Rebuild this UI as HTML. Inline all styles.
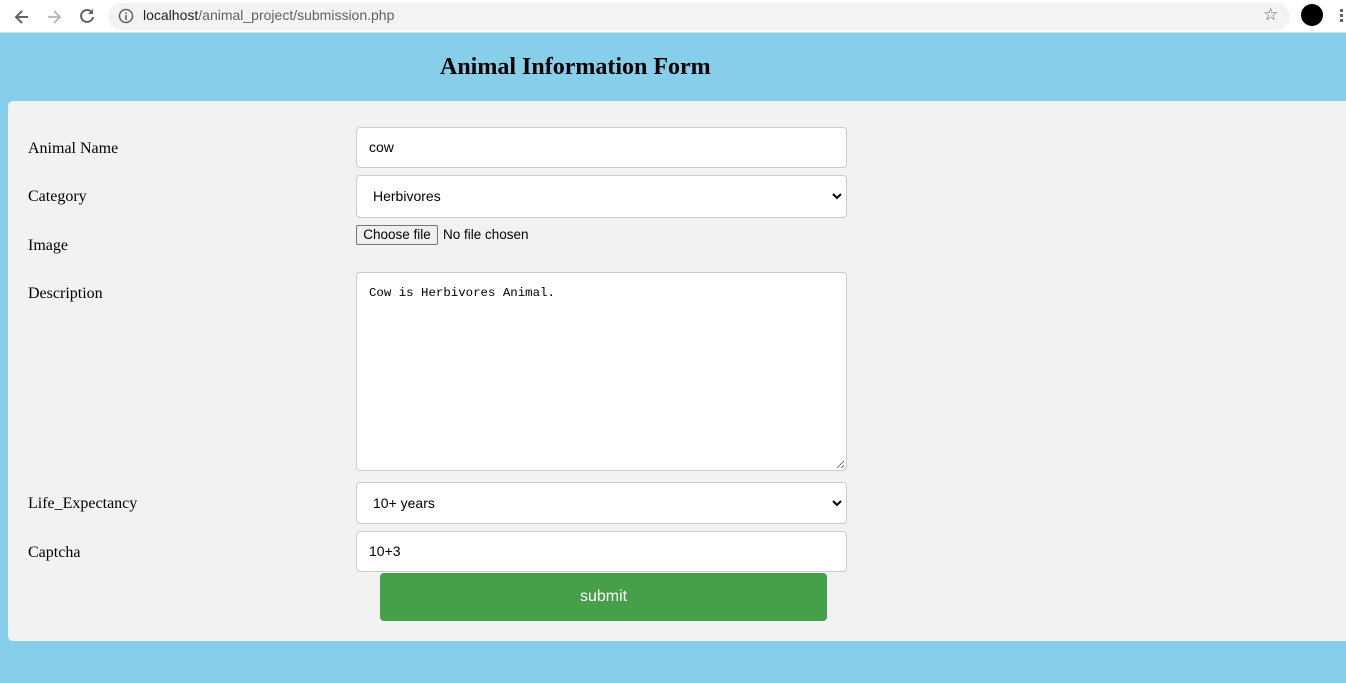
<!DOCTYPE html>
<html><head><meta charset="utf-8"><style>
*{box-sizing:border-box;margin:0;padding:0}
body{width:1346px;height:683px;overflow:hidden;background:#87CEEB;position:relative;font-family:"Liberation Serif",serif}
.bar{position:absolute;left:0;top:0;width:1346px;height:33px;background:#fff;border-bottom:1px solid #dadce0}
.omni{position:absolute;left:108px;top:3px;width:1182px;height:27px;background:#f1f3f4;border-radius:14px}
.url{position:absolute;left:143px;top:7px;font:14px "Liberation Sans",sans-serif;color:#202124}
.url span{color:#5f6368}
.a{position:absolute}
h2{position:absolute;left:440px;top:54px;font-size:24px;font-weight:bold;color:#000}
.panel{position:absolute;left:8px;top:101px;width:1346px;height:540px;background:#f2f2f2;border-radius:5px}
.lbl{position:absolute;left:28px;font-size:16px;color:#000}
.f{position:absolute;left:356px;width:491px;background:#fff;border:1px solid #ccc;border-radius:4px;font:14px "Liberation Sans",sans-serif;color:#000}
.btn{position:absolute;left:380px;top:573px;width:447px;height:48px;background:#45a049;border-radius:4px;color:#fff;font:16px "Liberation Sans",sans-serif;text-align:center;line-height:48px}
</style></head><body>
<div class="bar">
<svg class="a" style="left:12px;top:7px" width="20" height="20" viewBox="0 0 20 20"><path d="M16 10H5M10 4l-6 6 6 6" stroke="#5f6368" stroke-width="2" fill="none"/></svg>
<svg class="a" style="left:44px;top:7px" width="20" height="20" viewBox="0 0 20 20"><path d="M4 10h11M10 4l6 6-6 6" stroke="#bbb" stroke-width="2" fill="none"/></svg>
<svg class="a" style="left:77px;top:6px" width="20" height="20" viewBox="0 0 20 20"><path d="M15 6.5A6 6 0 1 0 16 11" stroke="#5f6368" stroke-width="2" fill="none"/><path d="M16 3v5h-5z" fill="#5f6368"/></svg>
<div class="omni"></div>
<svg class="a" style="left:118px;top:8px" width="16" height="16" viewBox="0 0 16 16"><circle cx="8" cy="8" r="6.5" stroke="#5f6368" stroke-width="1.5" fill="none"/><path d="M8 7v5M8 4.5v1.5" stroke="#5f6368" stroke-width="1.6"/></svg>
<div class="url">localhost<span>/animal_project/submission.php</span></div>
<div class="a" style="left:1263px;top:5px;font-size:17px;color:#5f6368">☆</div>
<div class="a" style="left:1301px;top:4px;width:22px;height:22px;border-radius:50%;background:#000"></div>
<div class="a" style="left:1340px;top:9px;width:3px;height:3px;background:#5f6368;box-shadow:0 5px #5f6368,0 10px #5f6368"></div>
</div>
<h2>Animal Information Form</h2>
<div class="panel"></div>
<div class="lbl" style="top:140px">Animal Name</div>
<div class="lbl" style="top:188px">Category</div>
<div class="lbl" style="top:237px">Image</div>
<div class="lbl" style="top:285px">Description</div>
<div class="lbl" style="top:495px">Life_Expectancy</div>
<div class="lbl" style="top:544px">Captcha</div>
<div class="f" style="top:127px;height:41px;padding:11px 12px">cow</div>
<div class="f" style="top:175px;height:43px;padding:12px 16px">Herbivores
<svg class="a" style="right:4px;top:16px" width="10" height="8" viewBox="0 0 10 8"><path d="M1 2l4 4 4-4" stroke="#000" stroke-width="2" fill="none"/></svg></div>
<div class="a" style="left:356px;top:225px;width:82px;height:20px;background:#efefef;border:1px solid #767676;border-radius:2px;font:13.5px 'Liberation Sans',sans-serif;text-align:center;line-height:18px">Choose file</div>
<div class="a" style="left:443px;top:227px;font:13.5px 'Liberation Sans',sans-serif">No file chosen</div>
<div class="f" style="top:272px;height:199px;padding:13px 12px;font:12.4px 'Liberation Mono',monospace">Cow is Herbivores Animal.
<svg class="a" style="right:1px;bottom:1px" width="9" height="9" viewBox="0 0 9 9"><path d="M8 1L1 8M8 5L5 8" stroke="#777" stroke-width="1"/></svg></div>
<div class="f" style="top:482px;height:42px;padding:12px 16px">10+ years
<svg class="a" style="right:4px;top:16px" width="10" height="8" viewBox="0 0 10 8"><path d="M1 2l4 4 4-4" stroke="#000" stroke-width="2" fill="none"/></svg></div>
<div class="f" style="top:531px;height:41px;padding:11px 12px">10+3</div>
<div class="btn">submit</div>
</body></html>
